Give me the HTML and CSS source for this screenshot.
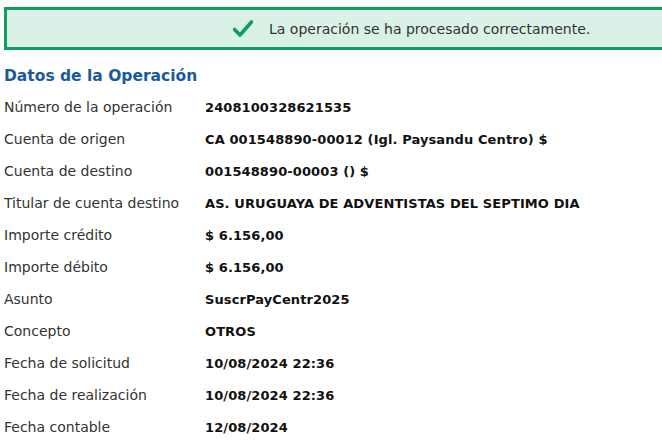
FILE: index.html
```html
<!DOCTYPE html>
<html lang="es">
<head>
<meta charset="utf-8">
<link rel="stylesheet" href="styles.css">
</head>
<body>
<div class="page">
  <div class="alert">
    <svg class="check" width="20" height="18" viewBox="0 0 20 18"><path d="M1.5 9.5 L7 15 L18.5 2" fill="none" stroke="#0f9e5e" stroke-width="3.6" stroke-linecap="round" stroke-linejoin="round"/></svg>
    <span class="alert-text">La operación se ha procesado correctamente.</span>
  </div>
  <h2 class="title">Datos de la Operación</h2>
  <dl class="details">
    <div class="row"><dt>Número de la operación</dt><dd>2408100328621535</dd></div>
    <div class="row"><dt>Cuenta de origen</dt><dd>CA 001548890-00012 (Igl. Paysandu Centro) $</dd></div>
    <div class="row"><dt>Cuenta de destino</dt><dd>001548890-00003 () $</dd></div>
    <div class="row"><dt>Titular de cuenta destino</dt><dd>AS. URUGUAYA DE ADVENTISTAS DEL SEPTIMO DIA</dd></div>
    <div class="row"><dt>Importe crédito</dt><dd>$ 6.156,00</dd></div>
    <div class="row"><dt>Importe débito</dt><dd>$ 6.156,00</dd></div>
    <div class="row"><dt>Asunto</dt><dd>SuscrPayCentr2025</dd></div>
    <div class="row"><dt>Concepto</dt><dd>OTROS</dd></div>
    <div class="row"><dt>Fecha de solicitud</dt><dd>10/08/2024 22:36</dd></div>
    <div class="row"><dt>Fecha de realización</dt><dd>10/08/2024 22:36</dd></div>
    <div class="row"><dt>Fecha contable</dt><dd>12/08/2024</dd></div>
  </dl>
</div>
</body>
</html>
```
FILE: styles.css
```css
html, body { margin: 0; padding: 0; background: #fff; }
body { font-family: "DejaVu Sans", sans-serif; color: #222; overflow: hidden; }
.page { padding: 7px 0 0 4px; width: 680px; }
.alert {
  box-sizing: border-box;
  height: 43px;
  border: 3px solid #0f9e5e;
  border-right: none;
  background: #d9f1e6;
  display: flex;
  align-items: center;
  padding-left: 226px;
}
.check { margin-right: 16px; margin-top: 1px; }
.alert-text { font-size: 14px; color: #333; }
.title {
  margin: 16px 0 0 0;
  font-size: 15.5px;
  font-weight: 600;
  color: #1a5a9c;
  line-height: 20px;
}
.details { margin: 5px 0 0 0; }
.row { display: flex; height: 32px; align-items: center; }
.row dt { width: 201px; font-size: 14px; color: #333; }
.row dd { margin: 0; font-size: 13px; font-weight: bold; color: #111; letter-spacing: 0.1px; }
```
